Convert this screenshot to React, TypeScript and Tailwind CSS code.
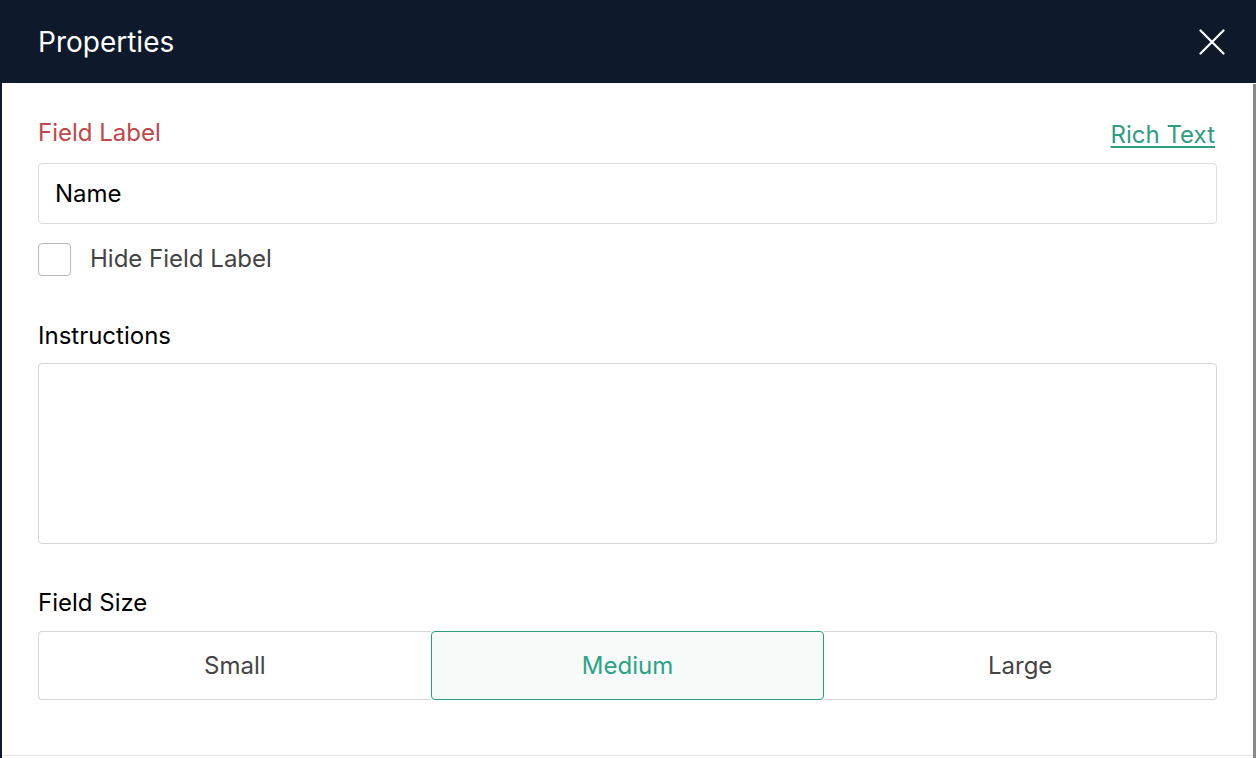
const sizes = ["Small", "Medium", "Large"];

export default function App() {
  const selected = "Medium";

  return (
    <div className="flex h-[758px] w-[1256px] bg-[#0e1a2b] font-['Inter',sans-serif]">
      <div className="ml-[2px] flex flex-1 flex-col">
        <header className="flex h-[83px] items-center justify-between pl-[36px] pr-[31px]">
          <h1 className="text-[28px] text-white">Properties</h1>
          <button aria-label="Close" className="text-white">
            <svg width="26" height="26" viewBox="0 0 26 26" fill="none" stroke="currentColor" strokeWidth="2.2" strokeLinecap="round">
              <path d="M1.5 1.5 24.5 24.5M24.5 1.5 1.5 24.5" />
            </svg>
          </button>
        </header>

        <div className="flex flex-1 bg-white">
          <div className="flex-1">
            <main className="flex flex-col border-b border-[#e6e6e6] pb-[55px] pl-[36px] pr-[36px] pt-[36px]">
              <div className="flex items-end justify-between">
                <label className="text-[24px] leading-[28px] text-[#c0474a]">Field Label</label>
                <a
                  href="#"
                  className="mb-[-2px] mr-[2px] text-[24px] leading-[28px] text-[#2e9e82] underline decoration-2 underline-offset-[3px]"
                >
                  Rich Text
                </a>
              </div>
              <input
                defaultValue="Name"
                className="mt-[16px] h-[61px] w-full rounded-[4px] border border-[#dcdcdc] px-[16px] text-[24px] text-black outline-none"
              />
              <label className="mt-[17px] flex items-center gap-[19px]">
                <span className="h-[33px] w-[33px] rounded-[4px] border border-[#b8b8b8]" />
                <span className="text-[24px] text-[#444]">Hide Field Label</span>
              </label>

              <label className="mt-[47px] text-[24px] leading-[24px] text-black">Instructions</label>
              <textarea className="mt-[15px] h-[181px] w-full resize-none rounded-[4px] border border-[#d6d6d6] outline-none" />

              <label className="mt-[47px] text-[24px] leading-[24px] text-black">Field Size</label>
              <div className="mt-[16px] flex h-[69px] w-full">
                {sizes.map((s, i) => {
                  const active = s === selected;
                  return (
                    <button
                      key={s}
                      className={
                        active
                          ? "flex-1 rounded-[4px] border border-[#2e9e82] bg-[#f6faf9] text-[24px] text-[#2ea385]"
                          : i === 0
                          ? "flex-1 rounded-l-[4px] border border-r-0 border-[#d6d6d6] text-[24px] text-[#444]"
                          : "flex-1 rounded-r-[4px] border border-l-0 border-[#d6d6d6] text-[24px] text-[#444]"
                      }
                    >
                      {s}
                    </button>
                  );
                })}
              </div>
            </main>
          </div>
          <div className="mt-[1px] w-[3px] bg-[#8a8a8a]" />
        </div>
      </div>
    </div>
  );
}
